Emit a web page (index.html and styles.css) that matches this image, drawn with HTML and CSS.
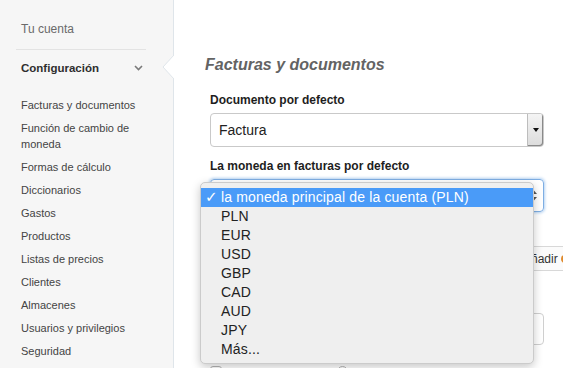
FILE: index.html
```html
<!DOCTYPE html>
<html lang="es">
<head>
    <meta charset="UTF-8">
    <meta name="viewport" content="width=device-width, initial-scale=1.0">
    <title>Facturas y documentos</title>
    <link rel="stylesheet" href="styles.css">
</head>
<body>
    <div class="page">
        <aside class="sidebar">
            <a class="account" href="#">Tu cuenta</a>
            <div class="section-head">
                <span>Configuración</span>
                <svg class="chevron" width="9" height="6" viewBox="0 0 9 6">
                    <polyline points="1,1 4.5,4.5 8,1" fill="none" stroke="#7a7a7a" stroke-width="1.6"/>
                </svg>
            </div>
            <ul class="menu">
                <li><a href="#">Facturas y documentos</a></li>
                <li><a href="#">Función de cambio de moneda</a></li>
                <li><a href="#">Formas de cálculo</a></li>
                <li><a href="#">Diccionarios</a></li>
                <li><a href="#">Gastos</a></li>
                <li><a href="#">Productos</a></li>
                <li><a href="#">Listas de precios</a></li>
                <li><a href="#">Clientes</a></li>
                <li><a href="#">Almacenes</a></li>
                <li><a href="#">Usuarios y privilegios</a></li>
                <li><a href="#">Seguridad</a></li>
            </ul>
            <svg class="notch" width="12" height="25" viewBox="0 0 12 25">
                <polygon points="12,0 1,12 12,24" fill="#fff"/>
                <polyline points="12,0 1,12 12,24" fill="none" stroke="#dfe5ea" stroke-width="1"/>
            </svg>
        </aside>

        <main class="content">
            <h2>Facturas y documentos</h2>

            <div class="form-group">
                <label>Documento por defecto</label>
                <div class="select-old">
                    <span>Factura</span>
                    <span class="select-btn">
                        <svg width="6" height="4" viewBox="0 0 6 4"><polygon points="0,0 6,0 3,4" fill="#111"/></svg>
                    </span>
                </div>
            </div>

            <div class="form-group">
                <label>La moneda en facturas por defecto</label>
                <div class="select-focus">
                    <svg class="updown" width="7" height="11" viewBox="0 0 7 11">
                        <polygon points="0,4 7,4 3.5,0" fill="#555"/>
                        <polygon points="0,7 7,7 3.5,11" fill="#555"/>
                    </svg>
                </div>
            </div>

            <div class="button-row">
                <button class="btn-add">Añadir<span class="dot"></span></button>
            </div>

            <div class="input-row">
                <div class="text-input"></div>
            </div>

            <div class="check-row">
                <span class="checkbox"></span>
                <span class="radio"></span>
            </div>

            <ul class="popup">
                <li class="selected"><span class="tick">✓</span>la moneda principal de la cuenta (PLN)</li>
                <li>PLN</li>
                <li>EUR</li>
                <li>USD</li>
                <li>GBP</li>
                <li>CAD</li>
                <li>AUD</li>
                <li>JPY</li>
                <li>Más...</li>
            </ul>
        </main>
    </div>
</body>
</html>
```

FILE: styles.css
```css
* {
    margin: 0;
    padding: 0;
    box-sizing: border-box;
    font-family: "Liberation Sans", Arial, sans-serif;
}

body {
    background-color: #fff;
    overflow: hidden;
}

.page {
    display: flex;
    height: 368px;
}

/* sidebar */

.sidebar {
    position: relative;
    flex: 0 0 174px;
    background-color: #f6f6f6;
    border-right: 1px solid #dfe5ea;
    padding: 21px 27px 0 16px;
}

.account {
    display: block;
    padding: 0 0 12px 5px;
    border-bottom: 1px solid #e3e3e3;
    font-size: 12px;
    line-height: 16px;
    color: #6a6a6a;
    text-decoration: none;
}

.section-head {
    display: flex;
    align-items: center;
    justify-content: space-between;
    padding: 10px 3px 0 5px;
    font-size: 11.5px;
    line-height: 16px;
    font-weight: bold;
    color: #2e2e2e;
}

.menu {
    list-style: none;
    margin-top: 21px;
    padding-left: 5px;
}

.menu li {
    margin-bottom: 7px;
    font-size: 11px;
    line-height: 16px;
}

.menu a {
    color: #444;
    text-decoration: none;
}

.notch {
    position: absolute;
    top: 55px;
    right: -1px;
}

/* content */

.content {
    position: relative;
    flex: 1;
    padding: 55px 0 0 31px;
}

h2 {
    font-size: 16px;
    line-height: 20px;
    font-style: italic;
    font-weight: bold;
    color: #636363;
}

.form-group {
    margin-left: 5px;
    width: 334px;
}

.form-group label {
    display: block;
    font-size: 12px;
    line-height: 15px;
    font-weight: bold;
    color: #1e1e1e;
    margin-top: 18px;
    margin-bottom: 5px;
}

.form-group + .form-group label {
    margin-top: 12px;
}

.select-old {
    display: flex;
    align-items: stretch;
    justify-content: space-between;
    height: 34px;
    border: 1px solid #c9c9c9;
    border-radius: 4px;
    font-size: 14px;
    color: #222;
}

.select-old span:first-child {
    padding-left: 8px;
    line-height: 32px;
}

.select-btn {
    display: flex;
    align-items: center;
    justify-content: center;
    width: 16px;
    background: linear-gradient(#f4f4f4, #dcdcdc);
    border-left: 1px solid #bdbdbd;
    border-radius: 0 3px 3px 0;
    box-shadow: inset -1px -1px 0 #8a8a8a;
}

.select-focus {
    display: flex;
    align-items: center;
    justify-content: flex-end;
    height: 33px;
    padding: 0 6px 0 9px;
    border: 1px solid #7eaee3;
    border-radius: 4px;
    box-shadow: 0 0 3px 1px #b5d3f3;
}

.button-row {
    margin: 34px 0 0 5px;
    height: 25px;
}

.btn-add {
    margin-left: 299px;
    height: 25px;
    padding: 0 10px 0 13px;
    width: 120px;
    text-align: left;
    background-color: #fbfbfb;
    border: 1px solid #d8d8d8;
    border-radius: 3px;
    font-size: 12px;
    color: #333;
}

.dot {
    display: inline-block;
    width: 8px;
    height: 8px;
    margin-left: 3px;
    border-radius: 50%;
    background-color: #e08a2c;
}

.input-row {
    margin: 42px 0 0 5px;
}

.text-input {
    width: 334px;
    height: 32px;
    border: 1px solid #cfcfcf;
    border-radius: 4px;
}

.check-row {
    display: flex;
    gap: 115px;
    margin: 21px 0 0 5px;
}

.checkbox {
    width: 12px;
    height: 12px;
    border: 1px solid #b5b5b5;
    border-radius: 3px;
}

.radio {
    width: 11px;
    height: 11px;
    border: 1px solid #b5b5b5;
    border-radius: 50%;
}

/* open native menu */

.popup {
    position: absolute;
    top: 182px;
    left: 26px;
    width: 334px;
    padding: 5px 0 4px;
    list-style: none;
    background-color: #efefef;
    border: 1px solid #cbcbcb;
    border-radius: 5px;
    box-shadow: 0 3px 10px rgba(0, 0, 0, 0.22);
}

.popup li {
    height: 19px;
    line-height: 19px;
    padding-left: 20px;
    font-size: 14px;
    letter-spacing: 0.15px;
    color: #222;
}

.popup li.selected {
    position: relative;
    background-color: #4a9bf8;
    color: #fff;
}

.tick {
    position: absolute;
    left: 4px;
    font-family: "DejaVu Sans", sans-serif;
    font-size: 15px;
    font-weight: bold;
}
```
